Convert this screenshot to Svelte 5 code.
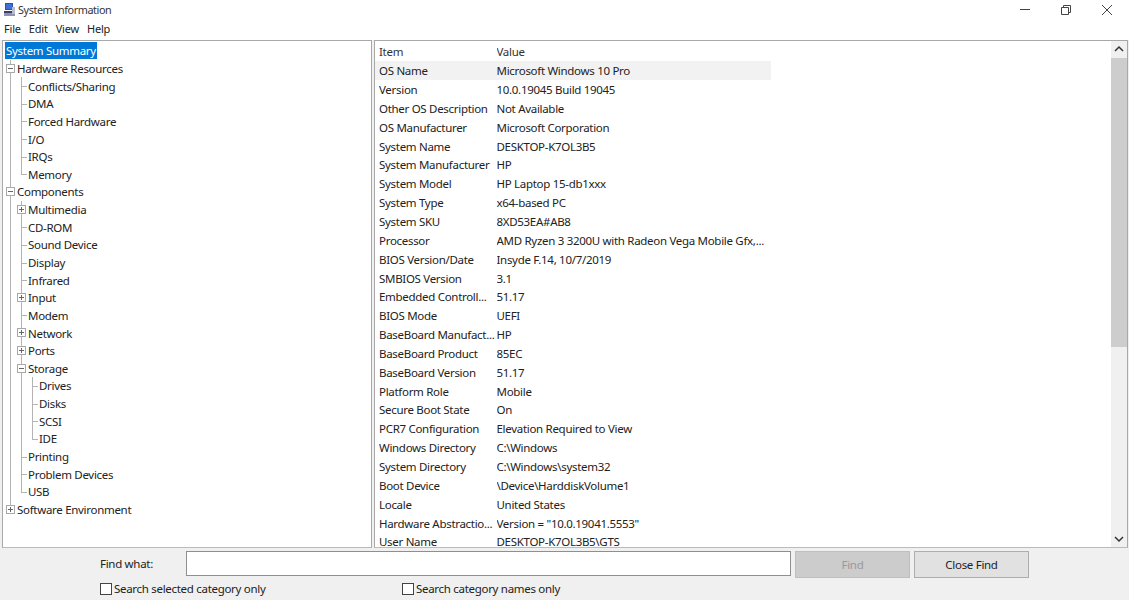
<script>
  // tree rows: prefix is one char per indent cell
  // | pipe, T tee, L last child, + collapsed, - expanded, space blank
  const tree = [
    { p: '', label: 'System Summary', selected: true },
    { p: '-', label: 'Hardware Resources' },
    { p: '|T', label: 'Conflicts/Sharing' },
    { p: '|T', label: 'DMA' },
    { p: '|T', label: 'Forced Hardware' },
    { p: '|T', label: 'I/O' },
    { p: '|T', label: 'IRQs' },
    { p: '|L', label: 'Memory' },
    { p: '-', label: 'Components' },
    { p: '|+', label: 'Multimedia' },
    { p: '|T', label: 'CD-ROM' },
    { p: '|T', label: 'Sound Device' },
    { p: '|T', label: 'Display' },
    { p: '|T', label: 'Infrared' },
    { p: '|+', label: 'Input' },
    { p: '|T', label: 'Modem' },
    { p: '|+', label: 'Network' },
    { p: '|+', label: 'Ports' },
    { p: '|-', label: 'Storage' },
    { p: '||T', label: 'Drives' },
    { p: '||T', label: 'Disks' },
    { p: '||T', label: 'SCSI' },
    { p: '||L', label: 'IDE' },
    { p: '|T', label: 'Printing' },
    { p: '|T', label: 'Problem Devices' },
    { p: '|L', label: 'USB' },
    { p: '+', label: 'Software Environment' }
  ];

  const items = [
    ['OS Name', 'Microsoft Windows 10 Pro'],
    ['Version', '10.0.19045 Build 19045'],
    ['Other OS Description', 'Not Available'],
    ['OS Manufacturer', 'Microsoft Corporation'],
    ['System Name', 'DESKTOP-K7OL3B5'],
    ['System Manufacturer', 'HP'],
    ['System Model', 'HP Laptop 15-db1xxx'],
    ['System Type', 'x64-based PC'],
    ['System SKU', '8XD53EA#AB8'],
    ['Processor', 'AMD Ryzen 3 3200U with Radeon Vega Mobile Gfx,...'],
    ['BIOS Version/Date', 'Insyde F.14, 10/7/2019'],
    ['SMBIOS Version', '3.1'],
    ['Embedded Controll...', '51.17'],
    ['BIOS Mode', 'UEFI'],
    ['BaseBoard Manufact...', 'HP'],
    ['BaseBoard Product', '85EC'],
    ['BaseBoard Version', '51.17'],
    ['Platform Role', 'Mobile'],
    ['Secure Boot State', 'On'],
    ['PCR7 Configuration', 'Elevation Required to View'],
    ['Windows Directory', 'C:\\Windows'],
    ['System Directory', 'C:\\Windows\\system32'],
    ['Boot Device', '\\Device\\HarddiskVolume1'],
    ['Locale', 'United States'],
    ['Hardware Abstractio...', 'Version = "10.0.19041.5553"'],
    ['User Name', 'DESKTOP-K7OL3B5\\GTS']
  ];
</script>

<div class="window">
  <header class="titlebar">
    <svg class="app-icon" width="13" height="14" viewBox="0 0 13 14">
      <rect x="2" y="0" width="8" height="7" fill="#2f4fa8" />
      <rect x="3" y="1" width="6" height="5" fill="#3f6fd8" />
      <path d="M1 8h9v2H1z" fill="#39406e" />
      <path d="M1 10h11v3H1z" fill="#8f93ad" />
      <rect x="9" y="4" width="3" height="7" fill="#b9bccb" />
    </svg>
    <span class="title">System Information</span>
    <div class="controls">
      <svg width="10" height="10" viewBox="0 0 10 10"><path d="M0 4.5h10" stroke="#444" fill="none" /></svg>
      <svg width="10" height="10" viewBox="0 0 10 10"><path d="M.5 2.5h7v7h-7zM2.5 2.5v-2h7v7h-2" stroke="#444" fill="none" /></svg>
      <svg width="10" height="10" viewBox="0 0 10 10"><path d="M0 0l10 10M10 0L0 10" stroke="#444" fill="none" /></svg>
    </div>
  </header>

  <nav class="menu">
    <span>File</span>
    <span>Edit</span>
    <span>View</span>
    <span>Help</span>
  </nav>

  <main class="panes">
    <div class="tree">
      {#each tree as row}
        <div class="tree-row">
          {#each row.p.split('') as cell}
            <span class="cell" class:pipe={cell === '|' || cell === 'T'} class:tee={cell === 'T'} class:last={cell === 'L'}>
              {#if cell === '+' || cell === '-'}
                <span class="expander" class:open={cell === '-'}></span>
              {/if}
            </span>
          {/each}
          <span class="node" class:selected={row.selected}>{row.label}</span>
        </div>
      {/each}
    </div>

    <div class="details">
      <div class="list">
        <div class="list-row head">
          <span>Item</span>
          <span>Value</span>
        </div>
        {#each items as [name, value], i}
          <div class="list-row" class:hot={i === 0}>
            <span>{name}</span>
            <span>{value}</span>
          </div>
        {/each}
      </div>
      <div class="scrollbar">
        <svg class="arrow" width="16" height="17" viewBox="0 0 16 17"><path d="M4 10l4-4 4 4" stroke="#333" stroke-width="1.5" fill="none" /></svg>
        <div class="track"><div class="thumb"></div></div>
        <svg class="arrow" width="16" height="17" viewBox="0 0 16 17"><path d="M4 7l4 4 4-4" stroke="#333" stroke-width="1.5" fill="none" /></svg>
      </div>
    </div>
  </main>

  <footer class="find">
    <div class="find-top">
      <label for="what">Find what:</label>
      <input id="what" type="text" />
      <button class="btn" disabled>Find</button>
      <button class="btn">Close Find</button>
    </div>
    <div class="find-opts">
      <label class="check first"><span class="box"></span>Search selected category only</label>
      <label class="check"><span class="box"></span>Search category names only</label>
    </div>
  </footer>
</div>

<style>
  :global(body) {
    margin: 0;
    background: #fff;
    font-family: "Noto Sans", "Open Sans", sans-serif;
    font-size: 11.5px;
    letter-spacing: -0.3px;
    color: #222;
  }

  .window {
    width: 1129px;
    height: 600px;
    display: flex;
    flex-direction: column;
    overflow: hidden;
    background: #f0f0f0;
  }

  .titlebar {
    height: 19px;
    display: flex;
    align-items: center;
    background: #fff;
    padding: 0 0 1px 3px;
    flex: none;
  }

  .app-icon {
    margin-right: 2px;
  }

  .title {
    font-size: 10.8px;
    letter-spacing: -0.4px;
    color: #333;
  }

  .controls {
    margin-left: auto;
    display: flex;
    gap: 31px;
    padding-right: 17px;
  }

  .menu {
    height: 17px;
    display: flex;
    gap: 8px;
    align-items: center;
    padding: 0 0 3px 4px;
    background: #fff;
    flex: none;
    font-size: 11px;
    letter-spacing: -0.2px;
  }

  .panes {
    height: 508px;
    flex: none;
    display: flex;
    gap: 2px;
    padding: 0 1px 0 2px;
    background: #f0f0f0;
  }

  .tree {
    width: 366px;
    border: 1px solid #a8a8a8;
    border-bottom-color: #bbb;
    background: #fff;
    padding: 1px 0 0 2px;
    overflow: hidden;
  }

  .tree-row {
    height: 17.65px;
    display: flex;
    align-items: stretch;
    white-space: nowrap;
  }

  .cell {
    position: relative;
    width: 11px;
    flex: none;
  }

  .cell.pipe::before,
  .cell.last::before {
    content: "";
    position: absolute;
    left: 5px;
    top: 0;
    bottom: 0;
    border-left: 1px solid #b4b4b4;
  }

  .cell.last::before {
    bottom: 50%;
  }

  .cell.tee::after,
  .cell.last::after {
    content: "";
    position: absolute;
    left: 5px;
    width: 6px;
    top: 50%;
    border-top: 1px solid #b4b4b4;
  }

  .cell:has(.expander)::before {
    content: "";
    position: absolute;
    left: 5px;
    top: 0;
    bottom: 0;
    border-left: 1px solid #b4b4b4;
  }

  .tree-row:last-child .cell::before {
    bottom: 50%;
  }

  /* box over the guide line */
  .expander {
    position: absolute;
    left: 1px;
    top: 4px;
    width: 7px;
    height: 7px;
    border: 1px solid #a8a8a8;
    background:
      linear-gradient(#666, #666) center / 5px 1px no-repeat,
      linear-gradient(#666, #666) center / 1px 5px no-repeat,
      #fff;
  }

  .expander.open {
    background:
      linear-gradient(#666, #666) center / 5px 1px no-repeat,
      #fff;
  }

  .node {
    align-self: center;
    line-height: 17px;
    padding-left: 1px;
  }

  .node.selected {
    background: #0078d7;
    color: #fff;
    padding: 0 1px 0 1px;
  }

  .details {
    flex: 1;
    display: flex;
    border: 1px solid #a8a8a8;
    border-bottom-color: #bbb;
    background: #fff;
    min-width: 0;
  }

  .list {
    flex: 1;
    overflow: hidden;
    padding-top: 1.5px;
  }

  .list-row {
    width: 396px;
    height: 18.85px;
    display: grid;
    grid-template-columns: 117.5px 278px;
    align-items: center;
    white-space: nowrap;
    padding-left: 4px;
    box-sizing: border-box;
  }

  .list-row span {
    overflow: hidden;
  }

  .list-row.head {
    color: #333;
  }

  .list-row.hot {
    background: #f2f2f2;
  }

  .scrollbar {
    width: 16px;
    flex: none;
    display: flex;
    flex-direction: column;
    background: #f0f0f0;
  }

  .arrow {
    flex: none;
  }

  .track {
    flex: 1;
  }

  .thumb {
    height: 289px;
    background: #cdcdcd;
  }

  .find {
    flex: 1;
    position: relative;
  }

  .find-top {
    display: flex;
    align-items: flex-start;
    padding: 3px 0 0 100px;
  }

  .find-top label {
    width: 86px;
    line-height: 25px;
  }

  #what {
    width: 605px;
    height: 25px;
    box-sizing: border-box;
    border: 1px solid #8f8f8f;
    background: #fff;
    margin-right: 4px;
    padding: 0;
  }

  .btn {
    width: 115px;
    height: 27px;
    margin-right: 4px;
    box-sizing: border-box;
    border: 1px solid #adadad;
    background: #e1e1e1;
    font: inherit;
    letter-spacing: inherit;
    color: #222;
    padding: 0;
  }

  .btn:disabled {
    background: #cccccc;
    border-color: #bfbfbf;
    color: #9a9a9a;
  }

  .find-opts {
    display: flex;
    padding-left: 100px;
    margin-top: 3px;
  }

  .check {
    display: flex;
    align-items: center;
    white-space: nowrap;
  }

  .check.first {
    width: 302px;
  }

  .box {
    width: 10px;
    height: 10px;
    border: 1px solid #444;
    background: #fff;
    margin-right: 2px;
  }
</style>
